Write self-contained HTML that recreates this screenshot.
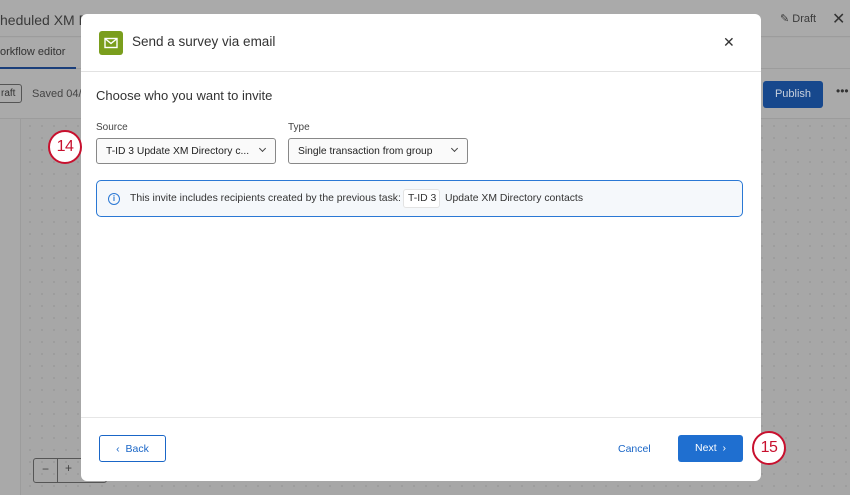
<!DOCTYPE html>
<html><head><style>
*{box-sizing:border-box;margin:0;padding:0}
body{width:850px;height:495px;overflow:hidden;position:relative;font-family:"Liberation Sans",sans-serif;background:#a7a7a7;
background-image:radial-gradient(circle,#9a9a9a 0.8px,transparent 1px);background-size:12px 12px}
.abs{position:absolute}
.topbar{left:0;top:0;width:850px;height:37px;background:#aaaaaa;border-bottom:1px solid #9c9c9c}
.tabbar{left:0;top:38px;width:850px;height:31px;background:#aaaaaa;border-bottom:1px solid #9c9c9c}
.tool{left:0;top:69px;width:850px;height:50px;background:#aaaaaa;border-bottom:1px solid #9c9c9c}
.side{left:0;top:119px;width:21px;height:376px;background:#a9a9a9;border-right:1px solid #9c9c9c}
.modal{left:81px;top:14px;width:680px;height:467px;background:#fff;border-radius:6px}
.t{font-size:13px;color:#333}
.sel{height:26px;border:1px solid #888;border-radius:3px;background:#fafafa;font-size:10.3px;color:#222;padding:7px 0 0 9px}
.chev{position:absolute;right:10px;top:7px;width:5px;height:5px;border-right:1.3px solid #444;border-bottom:1.3px solid #444;transform:rotate(45deg)}
.circ{width:34px;height:34px;border:2.5px solid #c8102e;border-radius:50%;background:#fff;color:#c8102e;font-size:16px;text-align:center;line-height:29px;letter-spacing:-0.5px}
</style></head><body>
<div class="abs topbar"></div>
<div class="abs t" style="left:0;top:12px;font-size:14px;color:#3a3a3a">heduled XM Dir</div>
<div class="abs" style="left:780px;top:12px;font-size:11px;color:#3a3a3a">✎ Draft</div>
<div class="abs" style="left:832px;top:9px;font-size:16px;color:#333">✕</div>
<div class="abs tabbar"></div>
<div class="abs" style="left:0;top:46px;font-size:11px;color:#333">orkflow editor</div>
<div class="abs" style="left:0;top:67px;width:76px;height:2px;background:#1a3e7a"></div>
<div class="abs tool"></div>
<div class="abs" style="left:-6px;top:84px;width:28px;height:19px;border:1px solid #555;border-radius:3px;font-size:10px;padding:3px 0 0 6px;color:#333">raft</div>
<div class="abs" style="left:32px;top:88px;font-size:11px;color:#444">Saved 04/0</div>
<div class="abs" style="left:763px;top:81px;width:60px;height:27px;background:#17488d;border-radius:3px;color:#c8d0dc;font-size:11px;text-align:center;line-height:27px">Publish</div>
<div class="abs" style="left:836px;top:84px;font-size:12px;color:#333">•••</div>
<div class="abs side"></div>
<div class="abs" style="left:33px;top:458px;width:74px;height:25px;border:1px solid #555;border-radius:3px"></div>
<div class="abs" style="left:42px;top:462px;font-size:12px;color:#444">−</div>
<div class="abs" style="left:57px;top:458px;width:1px;height:25px;background:#555"></div>
<div class="abs" style="left:65px;top:461px;font-size:12px;color:#444">+</div>

<div class="abs modal">
  <div class="abs" style="left:18px;top:17px;width:24px;height:24px;background:#7a9e1d;border-radius:3px"></div>
  <svg class="abs" style="left:23px;top:23px" width="14" height="12" viewBox="0 0 14 12"><rect x="1" y="1.5" width="12" height="9" fill="none" stroke="#fff" stroke-width="1.4"/><path d="M1.5 2 L7 6.5 L12.5 2" fill="none" stroke="#fff" stroke-width="1.4"/></svg>
  <div class="abs" style="left:51px;top:20px;font-size:13.5px;color:#333">Send a survey via email</div>
  <div class="abs" style="left:642px;top:20px;font-size:14px;color:#333">✕</div>
  <div class="abs" style="left:0;top:57px;width:680px;height:1px;background:#e2e2e2"></div>
  <div class="abs" style="left:15px;top:74px;font-size:13px;color:#333">Choose who you want to invite</div>
  <div class="abs" style="left:15px;top:108px;font-size:10px;color:#444">Source</div>
  <div class="abs" style="left:207px;top:108px;font-size:10px;color:#444">Type</div>
  <div class="abs sel" style="left:15px;top:124px;width:180px">T-ID 3 Update XM Directory c...<span class="chev"></span></div>
  <div class="abs sel" style="left:207px;top:124px;width:180px">Single transaction from group<span class="chev"></span></div>
  <div class="abs" style="left:15px;top:166px;width:647px;height:37px;border:1px solid #2a78d4;border-radius:5px;background:#f5f8fb"></div>
  <div class="abs" style="left:27px;top:179px;width:12px;height:12px;border:1.2px solid #2a78d4;border-radius:50%;font-size:8px;color:#2a78d4;text-align:center;line-height:10px;font-weight:bold">i</div>
  <div class="abs" style="left:49px;top:179px;font-size:10.4px;color:#333;white-space:nowrap">This invite includes recipients created by the previous task:</div>
  <div class="abs" style="left:322px;top:175px;width:37px;height:19px;background:#fff;border:1px solid #e3e3e3;border-radius:3px;font-size:10.4px;color:#333;padding:3px 0 0 4px">T-ID 3</div>
  <div class="abs" style="left:364px;top:179px;font-size:10.4px;color:#333">Update XM Directory contacts</div>
  <div class="abs" style="left:0;top:403px;width:680px;height:1px;background:#e6e6e6"></div>
  <div class="abs" style="left:18px;top:421px;width:67px;height:27px;border:1px solid #1a66c7;border-radius:3px;color:#1a66c7;font-size:10.5px;text-align:center;line-height:26px">‹&nbsp; Back</div>
  <div class="abs" style="left:537px;top:429px;font-size:10.5px;color:#1a66c7">Cancel</div>
  <div class="abs" style="left:597px;top:421px;width:65px;height:27px;background:#1f6fd0;border-radius:3px;color:#fff;font-size:10.5px;text-align:center;line-height:27px">Next &nbsp;›</div>
</div>
<div class="abs circ" style="left:48px;top:130px">14</div>
<div class="abs circ" style="left:752px;top:431px">15</div>
</body></html>
